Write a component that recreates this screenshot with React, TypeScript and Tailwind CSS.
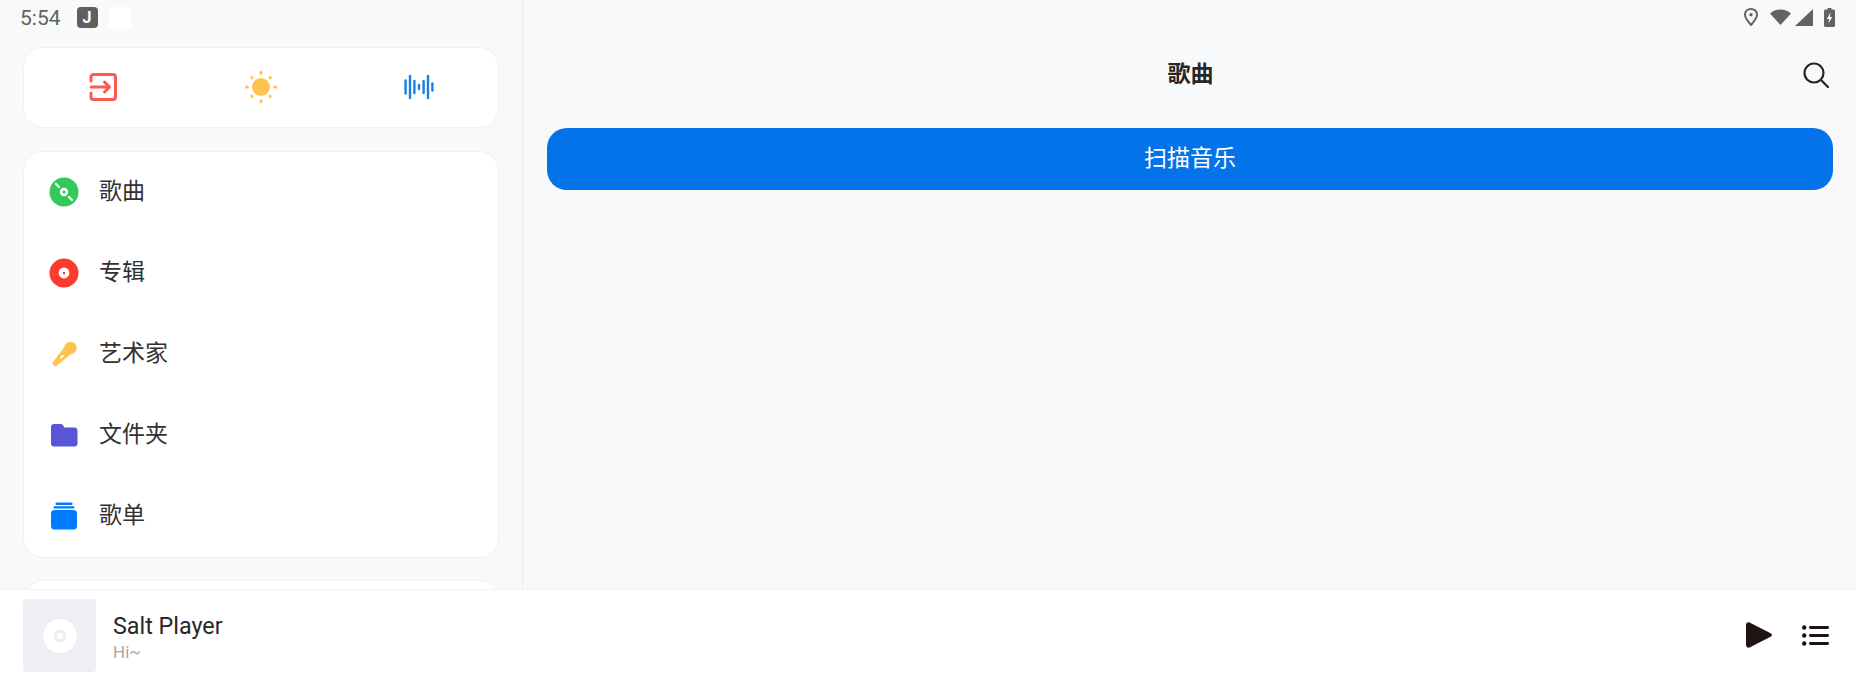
import React from "react";

const font = "font-['Roboto','Noto_Sans_CJK_SC',sans-serif]";

function ExitIcon() {
  return (
    <svg width="30" height="30" viewBox="0 0 30 30" fill="none" stroke="#ff5a52" strokeWidth="3" strokeLinecap="round" strokeLinejoin="round">
      <path d="M3 9V5A2.5 2.5 0 0 1 5.5 2.5H25A2.5 2.5 0 0 1 27.5 5V25A2.5 2.5 0 0 1 25 27.5H5.5A2.5 2.5 0 0 1 3 25V21" />
      <path d="M3 15H21M16.5 10L21.5 15L16.5 20" />
    </svg>
  );
}

function SunIcon() {
  const rays = [0, 45, 90, 135, 180, 225, 270, 315];
  return (
    <svg width="34" height="34" viewBox="0 0 34 34">
      <circle cx="17" cy="17" r="9" fill="#ffc44f" />
      {rays.map((r) => (
        <rect key={r} x={r % 90 === 0 ? 15.5 : 15.4} y={r % 90 === 0 ? 0.8 : 2.4} width={r % 90 === 0 ? 3 : 3.2} height={r % 90 === 0 ? 4 : 3.2} rx="1.5" fill="#ffc44f" transform={`rotate(${r} 17 17)`} />
      ))}
    </svg>
  );
}

function WaveIcon() {
  const bars: [number, number][] = [[1.6, 15], [6, 24], [10.4, 14], [15, 6], [19.6, 14], [24, 24], [28.4, 9]];
  return (
    <svg width="30" height="26" viewBox="0 0 30 26" stroke="#1a7ee8" strokeWidth="2.4" strokeLinecap="round">
      {bars.map(([x, h]) => (
        <line key={x} x1={x} x2={x} y1={13 - h / 2 + 1} y2={13 + h / 2 - 1} />
      ))}
    </svg>
  );
}

function DiscGreen() {
  return (
    <svg width="30" height="30" viewBox="0 0 30 30">
      <circle cx="15" cy="15" r="14.5" fill="#34c759" />
      <circle cx="15" cy="15" r="4.2" fill="#fff" />
      <circle cx="15" cy="15" r="1.6" fill="#34c759" />
      <path d="M7 7L10 10M20 20L23 23" stroke="#fff" strokeWidth="2.4" strokeLinecap="round" />
    </svg>
  );
}

function DiscRed() {
  return (
    <svg width="30" height="30" viewBox="0 0 30 30">
      <circle cx="15" cy="15" r="14.5" fill="#ff3b30" />
      <circle cx="15" cy="15" r="5.4" fill="#fff" />
      <circle cx="15" cy="15" r="1.2" fill="#ff3b30" />
    </svg>
  );
}

function MicIcon() {
  return (
    <svg width="30" height="30" viewBox="0 0 30 30">
      <circle cx="21.5" cy="9" r="6.2" fill="#ffc44f" />
      <path d="M15.6 7.8L22.6 14.6L8 26.6C7 27.4 5.5 27.3 4.5 26.3C3.5 25.3 3.3 23.9 4.2 22.8Z" fill="#ffc44f" />
      <path d="M12 18.5L14 16.8" stroke="#fff" strokeWidth="2" strokeLinecap="round" />
    </svg>
  );
}

function FolderIcon() {
  return (
    <svg width="28" height="24" viewBox="0 0 28 24">
      <path d="M1 4C1 2.3 2.3 1 4 1H10.5C11.6 1 12.4 1.5 13 2.3L14.5 4.5H24.5C26.2 4.5 27.5 5.8 27.5 7.5V20.5C27.5 22.2 26.2 23.5 24.5 23.5H4C2.3 23.5 1 22.2 1 20.5Z" fill="#5856d6" />
    </svg>
  );
}

function StackIcon() {
  return (
    <svg width="28" height="28" viewBox="0 0 28 28">
      <rect x="5.5" y="0.5" width="17" height="2.4" rx="1.2" fill="#007aff" />
      <rect x="3.5" y="4.3" width="21" height="2.2" rx="1.1" fill="#007aff" />
      <rect x="1" y="8" width="26" height="19.5" rx="3.5" fill="#007aff" />
    </svg>
  );
}

function MenuRow({ icon, label }: { icon: React.ReactNode; label: string }) {
  return (
    <div className="flex h-[81px] items-center pb-[2px] pl-[25px]">
      <div className="flex w-[30px] items-center justify-center">{icon}</div>
      <span className="ml-[20px] text-[23px] leading-[30px] text-[#333030]">{label}</span>
    </div>
  );
}

export default function App() {
  return (
    <div className={`${font} flex h-[696px] w-[1856px] flex-col overflow-hidden bg-[#f8f9fb]`}>
      <div className="flex min-h-0 flex-1">
        <aside className="flex w-[523px] shrink-0 flex-col overflow-hidden border-r border-[#eceef1] pl-[23px] pr-[23px]">
          <div className="flex h-[47px] shrink-0 items-start pt-[7px]">
            <span className="ml-[-3px] text-[21px] leading-[22px] text-[#616161]">5:54</span>
            <div className="ml-[16px] flex h-[21px] w-[21px] items-center justify-center rounded-[4px] bg-[#5f5f5f] text-[16px] font-bold leading-none text-white">J</div>
            <div className="ml-[11px] h-[22px] w-[22px] rounded-[2px] bg-white" />
          </div>
          <div className="flex h-[81px] shrink-0 items-center rounded-[20px] border border-[#f0f1f3] bg-white pb-[2px]">
            <div className="flex flex-1 justify-center"><ExitIcon /></div>
            <div className="flex flex-1 justify-center"><SunIcon /></div>
            <div className="flex flex-1 justify-center"><WaveIcon /></div>
          </div>
          <div className="mt-[23px] shrink-0 rounded-[20px] border border-[#f0f1f3] bg-white">
            <MenuRow icon={<DiscGreen />} label="歌曲" />
            <MenuRow icon={<DiscRed />} label="专辑" />
            <MenuRow icon={<MicIcon />} label="艺术家" />
            <MenuRow icon={<FolderIcon />} label="文件夹" />
            <MenuRow icon={<StackIcon />} label="歌单" />
          </div>
          <div className="mt-[22px] h-[80px] shrink-0 rounded-[20px] border border-[#f0f1f3] bg-white" />
        </aside>
        <main className="flex min-w-0 flex-1 flex-col">
          <div className="flex h-[34px] shrink-0 items-center justify-end pr-[21px]">
            <svg width="14" height="18" viewBox="0 0 14 18" fill="none" stroke="#636363" strokeWidth="2">
              <path d="M7 1C3.6 1 1 3.4 1 6.6C1 10.4 7 17 7 17C7 17 13 10.4 13 6.6C13 3.4 10.4 1 7 1Z" />
              <circle cx="7" cy="6.7" r="1.7" fill="#636363" stroke="none" />
            </svg>
            <svg className="ml-[12px]" width="21" height="16" viewBox="0 0 21 16"><path d="M0 4.5C6 -0.8 15 -0.8 21 4.5L10.5 16Z" fill="#636363" /></svg>
            <svg className="ml-[4px]" width="18" height="17" viewBox="0 0 18 17"><path d="M18 0V17H0Z" fill="#636363" /></svg>
            <svg className="ml-[11px]" width="11" height="19" viewBox="0 0 11 19">
              <path d="M3.5 0H7.5V1.5H9.5C10.3 1.5 11 2.2 11 3V17.5C11 18.3 10.3 19 9.5 19H1.5C0.7 19 0 18.3 0 17.5V3C0 2.2 0.7 1.5 1.5 1.5H3.5Z" fill="#636363" />
              <path d="M6.5 4.5L3 11H5.2L4.5 15.5L8.1 9H5.8Z" fill="#fff" />
            </svg>
          </div>
          <div className="relative mt-[13px] flex h-[56px] shrink-0 items-center justify-center">
            <span className="ml-[2px] text-[23px] font-bold leading-[30px] text-[#2a2626]">歌曲</span>
            <svg className="absolute right-[27px] top-[15px]" width="26" height="26" viewBox="0 0 26 26" fill="none" stroke="#2a2323" strokeWidth="2.2" strokeLinecap="round">
              <circle cx="11" cy="11" r="9.5" />
              <path d="M18 18L25 25" />
            </svg>
          </div>
          <div className="mt-[25px] pl-[24px] pr-[23px]">
            <button className="flex h-[62px] w-full items-center justify-center rounded-[20px] bg-[#0472e8] text-[23px] text-white">扫描音乐</button>
          </div>
        </main>
      </div>
      <footer className="flex h-[107px] shrink-0 items-start border-t border-[#f0f1f3] bg-white pl-[23px] pr-[27px] pt-[9px]">
        <div className="flex h-[73px] w-[73px] shrink-0 items-center justify-center rounded-[4px] bg-[#eeeff4]">
          <svg width="34" height="34" viewBox="0 0 34 34">
            <circle cx="17" cy="17" r="17" fill="#fff" />
            <circle cx="17" cy="17" r="6.5" fill="#eeeff4" />
            <circle cx="17" cy="17" r="3" fill="#fff" />
          </svg>
        </div>
        <div className="ml-[17px] flex flex-col pt-[14px]">
          <span className="text-[23.3px] leading-[26px] text-[#2a2626]">Salt Player</span>
          <span className="mt-[3px] text-[17px] leading-[20px] text-[#a6a6a6]">Hi~</span>
        </div>
        <div className="ml-auto flex items-center gap-[30px] pt-[23px]">
          <svg width="26" height="26" viewBox="0 0 26 26"><path d="M0 3C0 0.8 2.2 -0.4 4 0.7L24.6 11.3C26.4 12.3 26.4 13.7 24.6 14.7L4 25.3C2.2 26.4 0 25.2 0 23Z" fill="#1e1414" /></svg>
          <svg width="27" height="21" viewBox="0 0 27 21">
            <g fill="#1e1414"><circle cx="2.2" cy="2.5" r="2.2" /><circle cx="2.2" cy="10.5" r="2.2" /><circle cx="2.2" cy="18.5" r="2.2" /><rect x="7" y="1.1" width="20" height="2.8" rx="1.4" /><rect x="7" y="9.1" width="20" height="2.8" rx="1.4" /><rect x="7" y="17.1" width="20" height="2.8" rx="1.4" /></g>
          </svg>
        </div>
      </footer>
    </div>
  );
}
